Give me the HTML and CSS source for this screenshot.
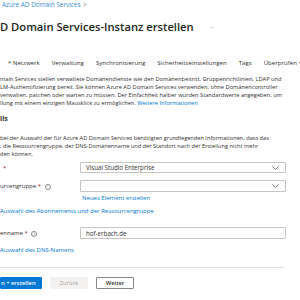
FILE: index.html
```html
<!DOCTYPE html>
<html lang="de">
<head>
    <meta charset="UTF-8">
    <title>Azure AD Domain Services-Instanz erstellen</title>
    <link rel="stylesheet" href="styles.css">
</head>
<body>
    <div class="page">
        <nav class="crumb">Azure AD Domain Services <span class="sep">&gt;</span></nav>
        <div class="title-row">
            <h1>D Domain Services-Instanz erstellen</h1>
            <span class="more">···</span>
        </div>
        <ul class="tabs">
            <li><span class="star">*</span>Netzwerk</li>
            <li>Verwaltung</li>
            <li>Synchronisierung</li>
            <li>Sicherheitseinstellungen</li>
            <li>Tags</li>
            <li>Überprüfen +</li>
        </ul>
        <div class="intro">
            <div class="line">main Services stellen verwaltete Domänendienste wie den Domänenbeitritt, Gruppenrichtlinien, LDAP und</div>
            <div class="line">LM-Authentifizierung bereit. Sie können Azure AD Domain Services verwenden, ohne Domänencontroller</div>
            <div class="line">verwalten, patchen oder warten zu müssen. Der Einfachheit halber wurden Standardwerte angegeben, um</div>
            <div class="line">llung mit einem einzigen Mausklick zu ermöglichen. <a href="#">Weitere Informationen</a></div>
        </div>
        <h2 class="section">ils</h2>
        <div class="note">
            <div class="line">bei der Auswahl der für Azure AD Domain Services benötigten grundlegenden Informationen, dass das</div>
            <div class="line">, die Ressourcengruppe, der DNS-Domänenname und der Standort nach der Erstellung nicht mehr</div>
            <div class="line">den können.</div>
        </div>
        <div class="field field-sub">
            <label class="label"><span class="req">*</span></label>
            <div class="select">
                <span>Visual Studio Enterprise</span>
                <svg class="chev" width="7" height="4" viewBox="0 0 7 4"><path d="M0.5 0.5 L3.5 3.5 L6.5 0.5" fill="none" stroke="#605e5c" stroke-width="0.8"/></svg>
            </div>
        </div>
        <div class="field field-rg">
            <label class="label">urcengruppe <span class="req">*</span> <span class="info">i</span></label>
            <div class="select">
                <span></span>
                <svg class="chev" width="7" height="4" viewBox="0 0 7 4"><path d="M0.5 0.5 L3.5 3.5 L6.5 0.5" fill="none" stroke="#605e5c" stroke-width="0.8"/></svg>
            </div>
        </div>
        <div class="field-link"><a href="#">Neues Element erstellen</a></div>
        <div class="help"><a href="#">Auswahl des Abonnements und der Ressourcengruppe</a></div>
        <div class="field field-dns">
            <label class="label">enname <span class="req">*</span> <span class="info">i</span></label>
            <div class="input">hof-erbach.de</div>
        </div>
        <div class="help help-dns"><a href="#">Auswahl des DNS-Namens</a></div>
        <div class="actions">
            <button class="btn btn-primary">n + erstellen</button>
            <button class="btn btn-disabled">Zurück</button>
            <button class="btn btn-default">Weiter</button>
        </div>
    </div>
</body>
</html>
```

FILE: styles.css
```css
html, body {
    margin: 0;
    padding: 0;
    background-color: #ffffff;
}
body {
    font-family: 'Open Sans', 'Noto Sans', sans-serif;
    color: #323130;
    width: 300px;
    height: 300px;
    overflow: hidden;
}
a {
    color: #0078d4;
    text-decoration: none;
}
.page {
    width: 300px;
}
.line {
    white-space: nowrap;
}
.crumb {
    font-size: 6.4px;
    line-height: 10px;
    color: #3a8fd6;
    padding-left: 2px;
}
.crumb .sep {
    color: #8a8886;
    margin-left: 1px;
}
.title-row {
    display: flex;
    align-items: center;
    margin-top: 8px;
    height: 18px;
}
h1 {
    margin: 0;
    font-size: 11.2px;
    font-weight: 600;
    line-height: 18px;
    color: #252423;
    white-space: nowrap;
}
.more {
    margin-left: 16px;
    font-size: 7px;
    color: #a19f9d;
    letter-spacing: -0.5px;
}
.tabs {
    list-style: none;
    margin: 22px 0 0 0;
    padding: 0 0 0 8px;
    display: flex;
    gap: 12px;
    font-size: 6.1px;
    line-height: 10px;
    white-space: nowrap;
}
.tabs .star {
    margin-right: 1.5px;
}
.intro {
    margin-top: 7px;
    font-size: 5.7px;
    line-height: 8px;
}
.section {
    margin: 7px 0 0 0;
    font-size: 7px;
    font-weight: 700;
    line-height: 10px;
}
.note {
    margin-top: 10px;
    font-size: 5.65px;
    line-height: 8px;
}
.field {
    display: flex;
    align-items: center;
    font-size: 6px;
}
.field-sub {
    margin-top: 4px;
}
.field-rg {
    margin-top: 7px;
}
.field-dns {
    margin-top: 11px;
}
.label {
    width: 80px;
    flex-shrink: 0;
    white-space: nowrap;
}
.field-sub .label {
    padding-left: 3px;
    width: 77px;
}
.req {
    color: #a4262c;
}
.info {
    display: inline-block;
    width: 4px;
    height: 4px;
    border: 0.6px solid #8a8886;
    border-radius: 50%;
    font-size: 3.5px;
    line-height: 4px;
    text-align: center;
    color: #8a8886;
    margin-left: 2px;
    vertical-align: 0;
}
.select, .input {
    width: 206px;
    height: 11px;
    box-sizing: border-box;
    border: 0.8px solid #c8c6c4;
    border-radius: 1px;
    display: flex;
    align-items: center;
    justify-content: space-between;
    padding: 0 6px 0 5px;
    font-size: 6.2px;
    color: #323130;
}
.field-rg .select {
    height: 12px;
}
.input {
    height: 12px;
}
.chev {
    display: block;
}
.field-link {
    margin-top: 2px;
    padding-left: 82px;
    font-size: 6px;
    line-height: 9px;
}
.help {
    margin-top: 4px;
    font-size: 6px;
    line-height: 9px;
}
.help-dns {
    margin-top: 7px;
}
.actions {
    margin-top: 12px;
    width: 284px;
    border-top: 1px solid #e1dfdd;
    padding-top: 9px;
    display: flex;
    gap: 8px;
}
.btn {
    font-family: inherit;
    font-size: 5.8px;
    font-weight: 600;
    height: 12px;
    width: 38px;
    padding: 0;
    border-radius: 1px;
    border: 0.8px solid #8a8886;
    background-color: #ffffff;
    color: #323130;
    white-space: nowrap;
}
.btn-primary {
    width: 42px;
    background-color: #0078d4;
    border-color: #0078d4;
    color: #ffffff;
    text-align: left;
    padding-left: 0;
}
.btn-disabled {
    background-color: #f3f2f1;
    border-color: #f3f2f1;
    color: #a19f9d;
    font-weight: 400;
}
```
